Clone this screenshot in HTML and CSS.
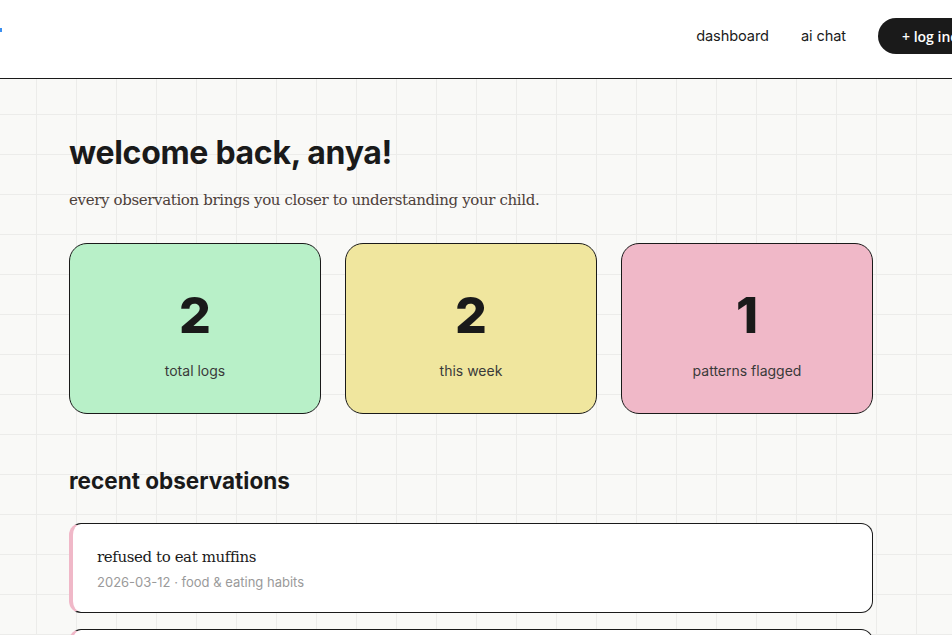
FILE: index.html
```html
<!DOCTYPE html>
<html lang="en">
<head>
<meta charset="utf-8">
<title>dashboard</title>
<link rel="stylesheet" href="styles.css">
</head>
<body>
<header class="topbar">
  <div class="brand-mark"></div>
  <nav class="nav">
    <a class="nav-link" href="#">dashboard</a>
    <a class="nav-link" href="#">ai chat</a>
    <button class="log-btn">+ log incident</button>
  </nav>
</header>
<main class="main">
  <h1 class="title">welcome back, anya!</h1>
  <p class="subtitle">every observation brings you closer to understanding your child.</p>
  <section class="stats">
    <div class="stat stat-green"><div class="stat-num">2</div><div class="stat-label">total logs</div></div>
    <div class="stat stat-yellow"><div class="stat-num">2</div><div class="stat-label">this week</div></div>
    <div class="stat stat-pink"><div class="stat-num">1</div><div class="stat-label">patterns flagged</div></div>
  </section>
  <h2 class="section-title">recent observations</h2>
  <div class="obs-list">
    <article class="obs">
      <div class="obs-title">refused to eat muffins</div>
      <div class="obs-meta">2026-03-12 · food &amp; eating habits</div>
    </article>
    <article class="obs">
      <div class="obs-title">&nbsp;</div>
      <div class="obs-meta">&nbsp;</div>
    </article>
  </div>
</main>
</body>
</html>
```

FILE: styles.css
```css
html, body {
  margin: 0;
  padding: 0;
}
body {
  font-family: "Inter", "Noto Sans", sans-serif;
  color: #1a1a1a;
  background-color: #f9f9f7;
  background-image:
    linear-gradient(to right, #ececea 1px, transparent 1px),
    linear-gradient(to bottom, #ececea 1px, transparent 1px);
  background-size: 40px 40px;
  background-position: 36px 34px;
  overflow: hidden;
  height: 635px;
}
.topbar {
  height: 79px;
  background: #ffffff;
  border-bottom: 1px solid #1a1a1a;
  display: flex;
  align-items: flex-start;
  justify-content: space-between;
  width: 1040px;
  box-sizing: border-box;
  padding-top: 18px;
}
.brand-mark {
  width: 2px;
  height: 4px;
  background: #3b8ff0;
  margin-top: 10px;
}
.nav {
  display: flex;
  align-items: center;
  height: 36px;
}
.nav-link {
  font-size: 14.6px;
  color: #1a1a1a;
  text-decoration: none;
  margin-right: 32px;
  letter-spacing: -0.1px;
}
.log-btn {
  background: #1a1a1a;
  color: #ffffff;
  border: none;
  border-radius: 18px;
  height: 36px;
  padding: 0 24px;
  font-family: "Open Sans", sans-serif;
  font-size: 14px;
  font-weight: 600;
  width: 162px;
  text-align: left;
}
.main {
  width: 804px;
  padding: 0 0 0 69px;
}
.title {
  margin: 52px 0 0;
  font-size: 32px;
  font-weight: 700;
  letter-spacing: -0.3px;
  line-height: 44px;
}
.subtitle {
  margin: 13px 0 0;
  font-family: "DejaVu Serif", serif;
  font-size: 15px;
  letter-spacing: -0.36px;
  color: #4d403a;
  line-height: 24px;
}
.stats {
  margin-top: 31px;
  display: grid;
  grid-template-columns: repeat(3, 1fr);
  gap: 24px;
}
.stat {
  height: 169px;
  border: 1px solid #1a1a1a;
  border-radius: 18px;
  display: flex;
  flex-direction: column;
  align-items: center;
  justify-content: flex-start;
}
.stat-green { background: #b8f0c8; }
.stat-yellow { background: #f0e69e; }
.stat-pink { background: #f0b8c8; }
.stat-num {
  font-size: 50px;
  font-weight: 800;
  line-height: 56px;
  margin-top: 43px;
}
.stat-label {
  font-size: 14px;
  color: #3a3a3a;
  margin-top: 18px;
  line-height: 20px;
}
.section-title {
  margin: 52px 0 0;
  font-size: 22.5px;
  font-weight: 700;
  line-height: 30px;
}
.obs-list {
  margin-top: 27px;
  display: flex;
  flex-direction: column;
  gap: 16px;
}
.obs {
  background: #ffffff;
  border: 1px solid #1a1a1a;
  border-left: 4px solid #f0b8c8;
  border-radius: 12px;
  padding: 22px 24px 20px 24px;
  height: 46px;
}
.obs-title {
  font-family: "DejaVu Serif", serif;
  font-size: 15px;
  letter-spacing: -0.4px;
  line-height: 22px;
}
.obs-meta {
  margin-top: 6px;
  font-size: 13px;
  color: #9a9a9a;
}
```
